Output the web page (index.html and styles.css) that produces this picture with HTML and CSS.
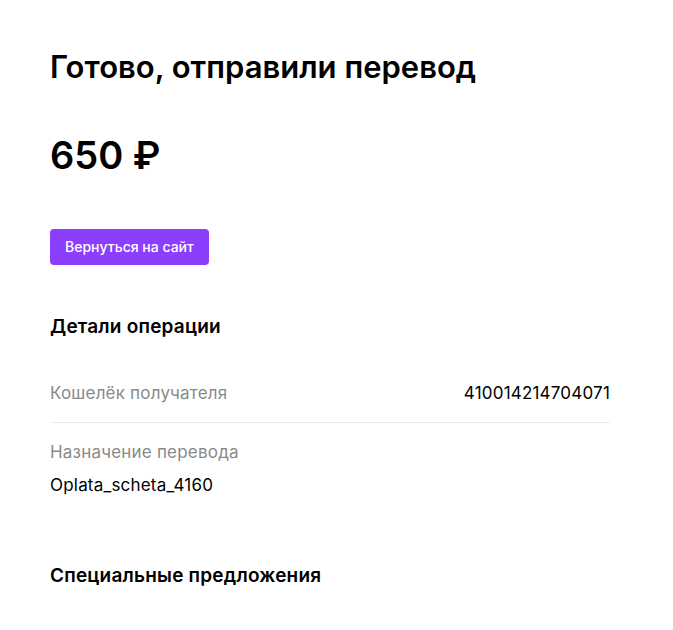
FILE: index.html
```html
<!DOCTYPE html>
<html lang="ru">
<head>
    <meta charset="UTF-8">
    <meta name="viewport" content="width=device-width, initial-scale=1.0">
    <title>Перевод выполнен</title>
    <link rel="stylesheet" href="styles.css">
</head>
<body>

<main class="page">
    <h1 class="title">Готово, отправили перевод</h1>

    <div class="amount">650 ₽</div>

    <a class="back-btn" href="#">Вернуться на сайт</a>

    <section class="details">
        <h2 class="section-title">Детали операции</h2>

        <div class="row row-split">
            <span class="label">Кошелёк получателя</span>
            <span class="value">410014214704071</span>
        </div>

        <div class="row">
            <div class="label">Назначение перевода</div>
            <div class="value">Oplata_scheta_4160</div>
        </div>
    </section>

    <section class="offers">
        <h2 class="section-title">Специальные предложения</h2>
    </section>
</main>

</body>
</html>
```

FILE: styles.css
```css
body {
    font-family: Inter, "Noto Sans", Arial, sans-serif;
    margin: 0;
    padding: 0;
    background-color: #fff;
    color: #000;
}
.page {
    width: 560px;
    padding: 45px 50px 0;
}
.title {
    margin: 0;
    font-size: 31px;
    font-weight: 600;
    line-height: 44px;
}
.amount {
    margin-top: 40px;
    font-size: 38px;
    font-weight: 600;
    line-height: 52px;
}
.back-btn {
    display: inline-block;
    margin-top: 48px;
    padding: 0 15px;
    height: 36px;
    line-height: 36px;
    background-color: #8b3ffd;
    color: #fff;
    font-size: 14px;
    font-weight: 500;
    text-decoration: none;
    border-radius: 4px;
}
.details {
    margin-top: 48px;
}
.section-title {
    margin: 0;
    font-size: 19px;
    font-weight: 600;
    line-height: 28px;
    letter-spacing: 0.2px;
}
.row {
    padding-top: 17px;
    font-size: 17px;
    line-height: 24px;
    letter-spacing: 0.2px;
}
.row-split {
    display: flex;
    justify-content: space-between;
    border-bottom: 1px solid #ebebeb;
    padding-top: 40px;
    padding-bottom: 17px;
}
.label {
    color: #8a8a8a;
}
.value {
    color: #000;
}
.row .value {
    margin-top: 9px;
}
.row-split .value {
    margin-top: 0;
}
.offers {
    margin-top: 65px;
}
```
